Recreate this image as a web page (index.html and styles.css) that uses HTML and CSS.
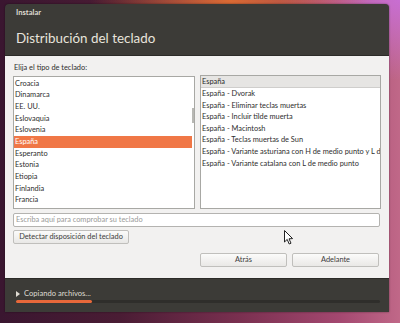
FILE: index.html
```html
<!DOCTYPE html>
<html lang="es">
<head>
<meta charset="utf-8">
<link rel="stylesheet" href="styles.css">
</head>
<body>
<div class="window">
  <div class="titlebar">Instalar</div>
  <div class="header">Distribución del teclado</div>
  <div class="content">
    <div class="label">Elija el tipo de teclado:</div>
    <div class="lists">
      <div class="list left">
        <div class="rows">
          <div class="row">Croacia</div>
          <div class="row">Dinamarca</div>
          <div class="row">EE. UU.</div>
          <div class="row">Eslovaquia</div>
          <div class="row">Eslovenia</div>
          <div class="row sel">España</div>
          <div class="row">Esperanto</div>
          <div class="row">Estonia</div>
          <div class="row">Etiopia</div>
          <div class="row">Finlandia</div>
          <div class="row">Francia</div>
        </div>
        <div class="scroll"></div>
      </div>
      <div class="list right">
        <div class="head">España</div>
        <div class="row">España - Dvorak</div>
        <div class="row">España - Eliminar teclas muertas</div>
        <div class="row">España - Incluir tilde muerta</div>
        <div class="row">España - Macintosh</div>
        <div class="row">España - Teclas muertas de Sun</div>
        <div class="row">España - Variante asturiana con H de medio punto y L de medio punto</div>
        <div class="row">España - Variante catalana con L de medio punto</div>
      </div>
    </div>
    <div class="input">Escriba aquí para comprobar su teclado</div>
    <div class="btn detect">Detectar disposición del teclado</div>
    <div class="nav">
      <div class="btn nb">Atrás</div>
      <div class="btn nb">Adelante</div>
    </div>
    <svg class="cursor" width="10" height="16" viewBox="0 0 10 16"><path d="M0.5 0.5 L0.5 12 L3.2 9.4 L5.2 14 L7 13.2 L5 8.8 L8.6 8.6 Z" fill="#fff" stroke="#222" stroke-width="1"/></svg>
  </div>
  <div class="footer">
    <div class="status"><span class="tri"></span>Copiando archivos...</div>
    <div class="progress"><div class="bar" style="width:76px"></div></div>
  </div>
</div>
</body>
</html>
```
FILE: styles.css
```css
html, body {
  margin: 0;
  padding: 0;
}
body {
  width: 400px;
  height: 323px;
  overflow: hidden;
  font-family: Lato, "Noto Sans", sans-serif;
  background:
    radial-gradient(ellipse 140px 60px at 230px 0px, rgba(225,110,50,0.95), rgba(225,110,50,0) 100%),
    radial-gradient(ellipse 120px 80px at 400px 0px, rgba(200,110,210,1), rgba(200,110,210,0) 100%),
    linear-gradient(90deg, #3a1630 0%, #4a1c34 30%, #7a3050 60%, #a44870 85%, #c06888 100%);
  padding-top: 4px;
  padding-left: 5px;
  box-sizing: border-box;
}
.window {
  width: 384px;
  height: 308px;
  background: #3c3b37;
  border-radius: 4px 4px 0 0;
  display: flex;
  flex-direction: column;
  box-shadow: 0 0 2px rgba(0,0,0,0.5);
}
.titlebar {
  height: 17px;
  padding-left: 11px;
  color: #dfdbd2;
  font-weight: bold;
  font-size: 7.6px;
  line-height: 17px;
}
.header {
  height: 34px;
  padding-left: 11px;
  color: #e8e4dc;
  font-size: 13.4px;
  line-height: 34px;
  border-bottom: 1px solid #2c2b28;
}
.content {
  position: relative;
  background: #f2f1f0;
  height: 222px;
  padding: 6px 8px 0 8px;
  box-sizing: border-box;
  font-size: 7.4px;
  color: #2e2e2e;
}
.label {
  height: 11px;
  line-height: 11px;
  padding-left: 1px;
  margin-bottom: 2px;
}
.lists {
  display: flex;
  gap: 5px;
  height: 134px;
}
.list {
  background: #fff;
  border: 1px solid #a8a8a4;
  box-sizing: border-box;
  overflow: hidden;
  position: relative;
}
.list.left {
  width: 183px;
  margin-top: 1px;
  height: 133px;
}
.list.right {
  width: 182px;
}
.rows {
  padding-top: 0.5px;
}
.row {
  height: 11.7px;
  line-height: 11.7px;
  padding-left: 1px;
  white-space: nowrap;
}
.left .row {
  margin-right: 2px;
}
.row.sel {
  background: #f07746;
  color: #fff;
}
.scroll {
  position: absolute;
  right: 0;
  top: 31px;
  width: 2px;
  height: 15px;
  background: #b8b8b4;
}
.head {
  height: 11px;
  line-height: 11px;
  background: #e6e5e3;
  border-bottom: 1px solid #cfcecc;
  padding-left: 1px;
  color: #2a2a2a;
}
.right .row {
  height: 11.6px;
  line-height: 11.6px;
}
.input {
  margin-top: 4px;
  height: 14px;
  width: 367px;
  box-sizing: border-box;
  border: 1px solid #b4b3b0;
  background: #fff;
  border-radius: 2px;
  color: #9a9a98;
  line-height: 12px;
  padding-left: 2px;
}
.btn {
  box-sizing: border-box;
  border: 1px solid #c0bfbc;
  border-radius: 2px;
  background: linear-gradient(#fbfbfa, #e9e8e6);
  color: #3c3c3c;
  text-align: center;
  white-space: nowrap;
}
.detect {
  margin-top: 3px;
  width: 116px;
  height: 14px;
  line-height: 12px;
}
.nav {
  display: flex;
  justify-content: flex-end;
  gap: 5px;
  margin-top: 9px;
  padding-right: 2px;
}
.nb {
  width: 87px;
  height: 14px;
  line-height: 12px;
}
.cursor {
  position: absolute;
  left: 279px;
  top: 174px;
}
.footer {
  flex: 1;
  padding: 9px 9px 0 11px;
  border-top: 1px solid #2c2b28;
}
.status {
  color: #dfdbd2;
  font-size: 7.6px;
  height: 11px;
  line-height: 11px;
  display: flex;
  align-items: center;
}
.tri {
  width: 0;
  height: 0;
  border-left: 4px solid #dfdbd2;
  border-top: 3px solid transparent;
  border-bottom: 3px solid transparent;
  margin-right: 4px;
}
.progress {
  margin-top: 1px;
  height: 3px;
  background: #2f2e2b;
  border-radius: 2px;
  width: 364px;
}
.bar {
  height: 3px;
  background: #e8683a;
  border-radius: 2px;
}
```
